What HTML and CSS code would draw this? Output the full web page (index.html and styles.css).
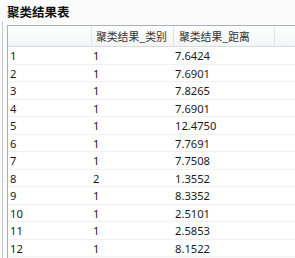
FILE: index.html
```html
<!DOCTYPE html>
<html>
<head>
<meta charset="utf-8">
<link rel="stylesheet" href="styles.css">
</head>
<body>
<div class="title">聚类结果表</div>
<div class="frame">
  <div class="grid">
    <div class="hd c1"></div>
    <div class="hd c2">聚类结果_类别</div>
    <div class="hd c3">聚类结果_距离</div>
    <div class="hd c4"></div>

    <div class="cell c1">1</div><div class="cell c2">1</div><div class="cell c3">7.6424</div><div class="cell c4"></div>
    <div class="cell c1">2</div><div class="cell c2">1</div><div class="cell c3">7.6901</div><div class="cell c4"></div>
    <div class="cell c1">3</div><div class="cell c2">1</div><div class="cell c3">7.8265</div><div class="cell c4"></div>
    <div class="cell c1">4</div><div class="cell c2">1</div><div class="cell c3">7.6901</div><div class="cell c4"></div>
    <div class="cell c1">5</div><div class="cell c2">1</div><div class="cell c3">12.4750</div><div class="cell c4"></div>
    <div class="cell c1">6</div><div class="cell c2">1</div><div class="cell c3">7.7691</div><div class="cell c4"></div>
    <div class="cell c1">7</div><div class="cell c2">1</div><div class="cell c3">7.7508</div><div class="cell c4"></div>
    <div class="cell c1">8</div><div class="cell c2">2</div><div class="cell c3">1.3552</div><div class="cell c4"></div>
    <div class="cell c1">9</div><div class="cell c2">1</div><div class="cell c3">8.3352</div><div class="cell c4"></div>
    <div class="cell c1">10</div><div class="cell c2">1</div><div class="cell c3">2.5101</div><div class="cell c4"></div>
    <div class="cell c1">11</div><div class="cell c2">1</div><div class="cell c3">2.5853</div><div class="cell c4"></div>
    <div class="cell c1">12</div><div class="cell c2">1</div><div class="cell c3">8.1522</div><div class="cell c4"></div>
  </div>
</div>
</body>
</html>
```
FILE: styles.css
```css
html, body {
  margin: 0;
  padding: 0;
  background: #fbfbfb;
  overflow: hidden;
}
body {
  width: 295px;
  height: 258px;
  display: flex;
  flex-direction: column;
  font-family: "Noto Sans", "Noto Sans CJK SC", sans-serif;
  color: #1a1a1a;
}
.title {
  height: 21px;
  flex: none;
  padding-left: 7px;
  font-family: "Noto Sans CJK SC", sans-serif;
  font-weight: bold;
  font-size: 12.5px;
  line-height: 23px;
  color: #111;
}
.frame {
  flex: 1;
  min-height: 0;
  overflow: hidden;
  margin-left: 2px;
  border-left: 1px solid #c6c6c6;
  padding-left: 4px;
  padding-top: 4px;
}
.grid {
  display: grid;
  grid-template-columns: 84px 82px 101px 1fr;
  grid-template-rows: 21px;
  grid-auto-rows: 17.5px;
  border-top: 1px solid #a9b0b8;
  border-left: 1px solid #a9b0b8;
  background: #fff;
  height: 100%;
  overflow: hidden;
  font-size: 11.2px;
}
.hd {
  background: linear-gradient(#ffffff, #f3f4f5);
  border-bottom: 1px solid #d9dbde;
  border-right: 1px solid #e3e4e6;
  font-family: "Noto Sans CJK SC", sans-serif;
  font-size: 10.8px;
  line-height: 21px;
  color: #333;
  white-space: nowrap;
}
.hd.c2 { padding-left: 4px; }
.hd.c3 { padding-left: 5px; }
.hd.c4 { border-right: none; }
.cell {
  border-bottom: 1px solid #f1f1f1;
  line-height: 17px;
  white-space: nowrap;
}
.cell.c1 { padding-left: 2px; }
.cell.c2 { padding-left: 1px; }
.cell.c3 { padding-left: 1px; }
```
